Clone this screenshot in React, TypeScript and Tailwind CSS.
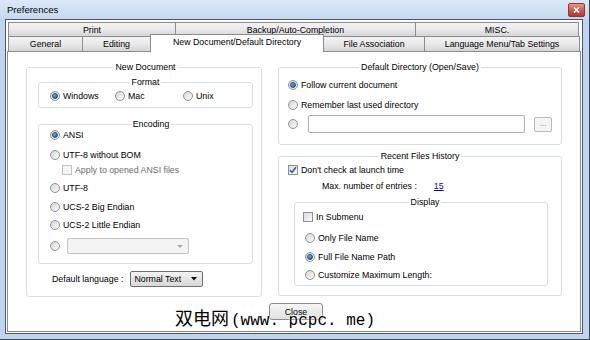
import type { ReactNode } from "react";

function Radio({ checked = false }: { checked?: boolean }) {
  return (
    <span className="flex h-[10px] w-[10px] shrink-0 items-center justify-center rounded-full border border-[#8f9193] bg-gradient-to-br from-[#d6d6d6] to-[#fbfbfb]">
      {checked && (
        <span className="h-[6px] w-[6px] rounded-full border border-[#1b4d7a] bg-gradient-to-br from-[#7fc0f0] to-[#1e5a96]" />
      )}
    </span>
  );
}

function Check({ checked = false, disabled = false }: { checked?: boolean; disabled?: boolean }) {
  return (
    <span
      className={`flex h-[10px] w-[10px] shrink-0 items-center justify-center border ${
        disabled ? "border-[#c4c4c4] bg-[#f4f4f4]" : "border-[#8f9193] bg-gradient-to-br from-[#dcdcdc] to-[#fbfbfb]"
      }`}
    >
      {checked && (
        <svg width="8" height="8" viewBox="0 0 8 8">
          <path d="M1 4.2 L3 6.3 L7 1.2" fill="none" stroke="#3c5aa0" strokeWidth="1.6" />
        </svg>
      )}
    </span>
  );
}

function Option({
  label,
  checked,
  className = "",
}: {
  label: string;
  checked?: boolean;
  className?: string;
}) {
  return (
    <div className={`flex h-[12px] items-center gap-[3px] ${className}`}>
      <Radio checked={checked} />
      <span>{label}</span>
    </div>
  );
}

function Group({
  title,
  className = "",
  children,
}: {
  title: string;
  className?: string;
  children: ReactNode;
}) {
  return (
    <div className={`flex flex-col rounded-[3px] border border-[#d5dfe5] ${className}`}>
      <div className="-mt-[6px] h-[11px] self-center bg-white px-[2px] leading-[11px]">{title}</div>
      {children}
    </div>
  );
}

function Tab({ label, w, first = false }: { label: string; w: string; first?: boolean }) {
  return (
    <div
      className={`flex h-full items-center justify-center border border-[#898c95] bg-gradient-to-b from-[#f3f3f3] via-[#e9e9e9] to-[#d6d6d6] ${w} ${
        first ? "" : "-ml-px"
      }`}
    >
      {label}
    </div>
  );
}

export default function App() {
  return (
    <div className="relative flex h-[340px] w-[590px] flex-col overflow-hidden border-r border-b border-[#3d4a5a] bg-[#bfd4ee] font-['Liberation_Sans',Arial,sans-serif] text-[8.8px] leading-[12px] text-black">
      <div className="flex h-[19px] items-center justify-between bg-gradient-to-b from-[#dce8f6] to-[#c6d9f1] pl-[7px] pr-[4px]">
        <span className="text-[9.5px]">Preferences</span>
        <div className="flex h-[14px] w-[17px] items-center justify-center rounded-[2px] border border-[#8a3a32] bg-gradient-to-b from-[#e59a8c] via-[#d0594a] to-[#b8372a]">
          <svg width="7" height="6" viewBox="0 0 7 6">
            <path d="M1 0.5 L6 5.5 M6 0.5 L1 5.5" stroke="#fff" strokeWidth="1.6" />
          </svg>
        </div>
      </div>

      <div className="mb-[5px] ml-[5px] mr-[6px] flex flex-1 flex-col border border-[#4b5a6e] bg-white px-px pt-[2px] pb-px">
        <div className="ml-px flex h-[15px]">
          <Tab label="Print" w="w-[168px]" first />
          <Tab label="Backup/Auto-Completion" w="w-[241px]" />
          <Tab label="MISC." w="w-[164px]" />
        </div>
        <div className="-mt-px ml-px flex h-[16px] items-end">
          <div className="flex h-[16px]">
            <Tab label="General" w="w-[75px]" first />
            <Tab label="Editing" w="w-[69px]" />
          </div>
          <div className="relative z-10 -ml-px flex h-[18px] w-[174px] justify-center border border-b-0 border-[#898c95] bg-white pt-[1px]">
            New Document/Default Directory
          </div>
          <div className="flex h-[16px]">
            <Tab label="File Association" w="w-[102px]" />
            <Tab label="Language Menu/Tab Settings" w="w-[156px]" />
          </div>
        </div>

        <div className="-mt-px flex flex-1 flex-col border border-[#898c95] bg-white px-[18px] pt-[15px]">
          <div className="flex gap-[16px]">
            <Group title="New Document" className="w-[236px] pl-[11px] pr-[8px] pb-[9px]">
              <Group title="Format" className="mt-[9px] pb-[5px]">
                <div className="mt-[2px] flex pl-[11px]">
                  <Option label="Windows" checked className="w-[65px]" />
                  <Option label="Mac" className="w-[68px]" />
                  <Option label="Unix" />
                </div>
              </Group>
              <Group title="Encoding" className="mt-[16px] pl-[11px] pb-[9px]">
                <Option label="ANSI" checked className="-mt-px" />
                <Option label="UTF-8 without BOM" className="mt-[8px]" />
                <div className="mt-[3px] ml-[12px] flex h-[12px] items-center gap-[3px] text-[#6d6d6d]">
                  <Check disabled />
                  <span>Apply to opened ANSI files</span>
                </div>
                <Option label="UTF-8" className="mt-[6px]" />
                <Option label="UCS-2 Big Endian" className="mt-[7px]" />
                <Option label="UCS-2 Little Endian" className="mt-[6px]" />
                <div className="mt-[7px] flex h-[16px] items-center gap-[7px]">
                  <Radio />
                  <div className="flex h-[16px] w-[122px] items-center justify-end rounded-[2px] border border-[#c3c3c3] bg-[#f4f4f4] pr-[5px]">
                    <svg width="6" height="3" viewBox="0 0 6 3">
                      <path d="M0 0 H6 L3 3 Z" fill="#a8a8a8" />
                    </svg>
                  </div>
                </div>
              </Group>
              <div className="mt-[7px] ml-[14px] flex h-[16px] items-center gap-[7px]">
                <span>Default language :</span>
                <div className="flex h-[16px] w-[73px] items-center justify-between rounded-[2px] border border-[#707070] bg-gradient-to-b from-[#f2f2f2] to-[#d9d9d9] pl-[3px] pr-[5px]">
                  <span>Normal Text</span>
                  <svg width="6" height="4" viewBox="0 0 6 4">
                    <path d="M0 0 H6 L3 3.5 Z" fill="#000" />
                  </svg>
                </div>
              </div>
            </Group>

            <div className="flex w-[284px] flex-col">
              <Group title="Default Directory (Open/Save)" className="px-[9px] pb-[11px]">
                <Option label="Follow current document" checked className="mt-[6px]" />
                <Option label="Remember last used directory" className="mt-[8px]" />
                <div className="mt-[4px] flex h-[18px] items-center">
                  <Radio />
                  <div className="ml-[10px] h-[18px] w-[220px] rounded-[2px] border border-[#abadb3] bg-white" />
                  <div className="ml-[9px] flex h-[15px] w-[18px] items-center justify-center rounded-[2px] border border-[#b5b9bd] bg-[#f4f4f4] pb-[3px] text-[#8a8a8a]">
                    ...
                  </div>
                </div>
              </Group>
              <Group title="Recent Files History" className="mt-[11px] px-[9px] pb-[9px]">
                <div className="mt-[2px] flex h-[12px] items-center gap-[3px]">
                  <Check checked />
                  <span>Don't check at launch time</span>
                </div>
                <div className="mt-[4px] ml-[34px] flex h-[12px] items-center gap-[17px]">
                  <span>Max. number of entries :</span>
                  <span className="text-[#0000ee] underline">15</span>
                </div>
                <Group title="Display" className="mt-[10px] ml-[6px] mr-[4px] pl-[8px] pb-[4px]">
                  <div className="mt-[3px] flex h-[12px] items-center gap-[3px]">
                    <Check />
                    <span>In Submenu</span>
                  </div>
                  <Option label="Only File Name" className="mt-[9px] ml-[2px]" />
                  <Option label="Full File Name Path" checked className="mt-[7px] ml-[2px]" />
                  <Option label="Customize Maximum Length:" className="mt-[6px] ml-[2px]" />
                </Group>
              </Group>
            </div>
          </div>

          <div className="mt-[6px] flex justify-center">
            <div className="ml-[4px] flex h-[17px] w-[54px] items-center justify-center rounded-[3px] border border-[#8a8a8a] bg-gradient-to-b from-[#f6f6f6] to-[#e0e0e0]">
              Close
            </div>
          </div>
        </div>
      </div>

      <div className="absolute top-[304px] left-[175px] z-20 flex items-baseline whitespace-pre text-black [text-shadow:0_0_2px_#fff,0_0_2px_#fff,0_0_1px_#fff]">
        <span className="font-['Noto_Sans_CJK_SC',sans-serif] text-[18px] leading-[26px]">双电网</span>
        <span className="ml-[2px] font-['Liberation_Mono',monospace] text-[16px] leading-[26px]">(www. pcpc. me)</span>
      </div>
    </div>
  );
}
